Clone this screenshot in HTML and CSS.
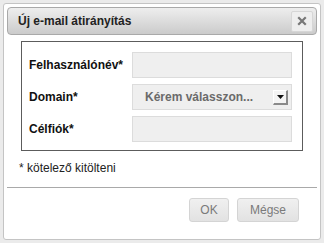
FILE: index.html
```html
<!DOCTYPE html>
<html lang="hu">
<head>
<meta charset="utf-8">
<title>Új e-mail átirányítás</title>
<link rel="stylesheet" href="styles.css">
</head>
<body>
<div class="dialog">
  <div class="titlebar">
    <span class="title">Új e-mail átirányítás</span>
    <button class="close" type="button" aria-label="Bezár">
      <svg width="10" height="10" viewBox="0 0 10 10"><path d="M2 2 L8 8 M8 2 L2 8" stroke="#777" stroke-width="2.2" stroke-linecap="square"/></svg>
    </button>
  </div>
  <div class="content">
    <div class="formbox">
      <label class="lbl">Felhasználónév*</label>
      <div class="field"></div>
      <label class="lbl">Domain*</label>
      <div class="field select">
        <span class="seltext">Kérem válasszon...</span>
        <span class="arrow"><svg width="7" height="4" viewBox="0 0 7 4"><path d="M0 0 H7 L3.5 4 Z" fill="#111"/></svg></span>
      </div>
      <label class="lbl">Célfiók*</label>
      <div class="field"></div>
    </div>
    <div class="note">* kötelező kitölteni</div>
  </div>
  <div class="footer">
    <button class="btn ok" type="button">OK</button>
    <button class="btn cancel" type="button">Mégse</button>
  </div>
</div>
</body>
</html>
```
FILE: styles.css
```css
html, body {
  margin: 0;
  padding: 0;
}
body {
  background: #ebebeb;
  font-family: "Liberation Sans", Arial, sans-serif;
  font-size: 12px;
  color: #000;
  padding: 3px;
  width: 324px;
  height: 243px;
  box-sizing: border-box;
}
.dialog {
  background: #fff;
  border: 1px solid #c4c4c4;
  border-radius: 3px;
  height: 237px;
  box-sizing: border-box;
  padding: 3px;
  display: flex;
  flex-direction: column;
}
.titlebar {
  height: 28px;
  box-sizing: border-box;
  border: 1px solid #a9a9a9;
  border-radius: 4px;
  background: linear-gradient(#eeeeee, #cbcbcb);
  display: flex;
  align-items: center;
  justify-content: space-between;
  padding: 0 3px 0 10px;
}
.title {
  font-weight: bold;
  font-size: 12px;
  color: #222;
}
.close {
  width: 22px;
  height: 21px;
  border: 1px solid #d6d6d6;
  border-radius: 2px;
  background: #eeeeee;
  padding: 0;
  display: flex;
  align-items: center;
  justify-content: center;
}
.content {
  padding: 6px 14px 0 14px;
}
.formbox {
  border: 1px solid #5c5c5c;
  display: grid;
  grid-template-columns: 103px 160px;
  row-gap: 6px;
  padding: 10px 9px 8px 7px;
  align-items: center;
}
.lbl {
  font-weight: bold;
  font-size: 12px;
  color: #111;
}
.field {
  height: 26px;
  box-sizing: border-box;
  background: #efefef;
  border: 1px solid #dcdcdc;
}
.select {
  display: flex;
  align-items: center;
  justify-content: space-between;
  padding: 0 3px 0 12px;
}
.seltext {
  font-weight: bold;
  color: #6a6a6a;
}
.arrow {
  width: 15px;
  height: 15px;
  box-sizing: border-box;
  background: #f4f4f4;
  border-top: 1px solid #fff;
  border-left: 1px solid #fff;
  border-right: 2px solid #8a8a8a;
  border-bottom: 2px solid #8a8a8a;
  display: flex;
  align-items: center;
  justify-content: center;
}
.note {
  margin: 10px 0 0 -2px;
  font-size: 12px;
  color: #222;
}
.footer {
  margin-top: 12px;
  border-top: 1px solid #a9a9a9;
  display: flex;
  justify-content: flex-end;
  gap: 8px;
  padding: 10px 18px 0 0;
}
.btn {
  height: 24px;
  box-sizing: border-box;
  border: 1px solid #d4d4d4;
  border-radius: 3px;
  background: linear-gradient(#f0f0f0, #e2e2e2);
  font-family: "Liberation Sans", Arial, sans-serif;
  font-size: 12px;
  color: #7a7a7a;
  padding: 0;
}
.ok { width: 40px; }
.cancel { width: 62px; }
```
